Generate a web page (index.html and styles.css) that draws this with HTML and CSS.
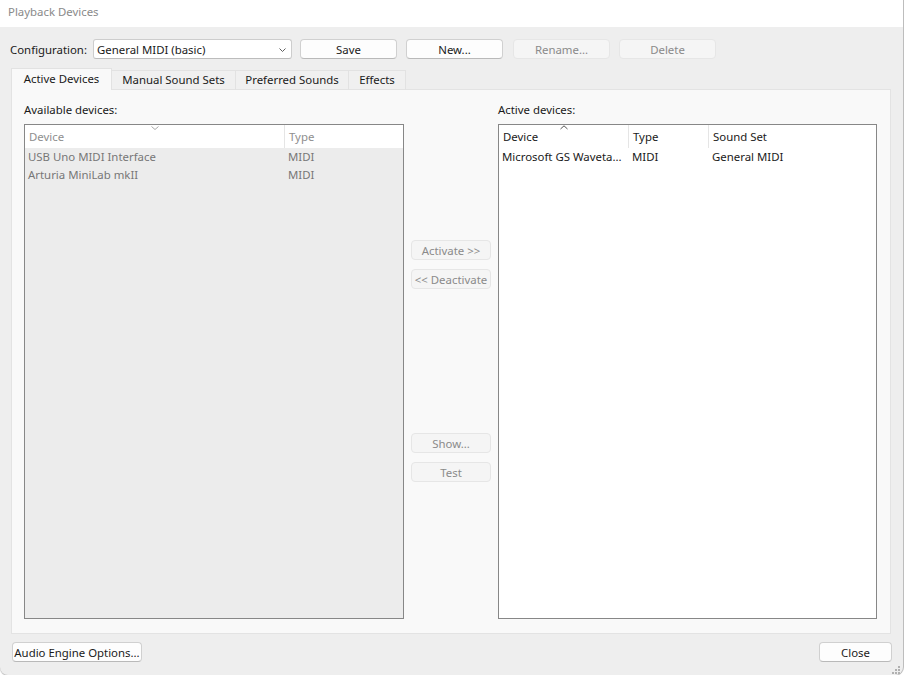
FILE: index.html
```html
<!DOCTYPE html>
<html>
<head>
<meta charset="utf-8">
<title>Playback Devices</title>
<link rel="stylesheet" href="styles.css">
</head>
<body>
<div class="window">
  <div class="titlebar">Playback Devices</div>
  <div class="config-row">
    <span class="config-label">Configuration:</span>
    <div class="combo">
      <span>General MIDI (basic)</span>
      <svg class="combo-chev" width="7" height="4" viewBox="0 0 7 4"><polyline points="0.5,0.5 3.5,3.5 6.5,0.5" fill="none" stroke="#5f5f5f" stroke-width="1"/></svg>
    </div>
    <button class="btn btn-top btn-save">Save</button>
    <button class="btn btn-top btn-new">New...</button>
    <button class="btn btn-top btn-rename" disabled>Rename...</button>
    <button class="btn btn-top btn-delete" disabled>Delete</button>
  </div>

  <div class="tabs">
    <div class="tab tab-active tab-w1">Active Devices</div>
    <div class="tab tab-w2">Manual Sound Sets</div>
    <div class="tab tab-w3">Preferred Sounds</div>
    <div class="tab tab-w4">Effects</div>
  </div>

  <div class="panel">
    <div class="list-col list-col-left">
      <div class="list-label">Available devices:</div>
      <div class="listbox listbox-disabled">
        <div class="list-head avail-grid">
          <div class="hcell hcell-div">Device</div>
          <div class="hcell">Type</div>
          <svg class="sort-ind sort-left" width="8" height="4" viewBox="0 0 8 4"><polyline points="0.5,0.5 4,3.5 7.5,0.5" fill="none" stroke="#a8a8a8" stroke-width="1"/></svg>
        </div>
        <div class="list-row avail-grid">
          <div class="cell">USB Uno MIDI Interface</div>
          <div class="cell">MIDI</div>
        </div>
        <div class="list-row avail-grid">
          <div class="cell">Arturia MiniLab mkII</div>
          <div class="cell">MIDI</div>
        </div>
      </div>
    </div>

    <div class="mid-col">
      <button class="btn btn-mid btn-activate" disabled>Activate &gt;&gt;</button>
      <button class="btn btn-mid btn-deactivate" disabled>&lt;&lt; Deactivate</button>
      <button class="btn btn-mid btn-show" disabled>Show...</button>
      <button class="btn btn-mid btn-test" disabled>Test</button>
    </div>

    <div class="list-col list-col-right">
      <div class="list-label">Active devices:</div>
      <div class="listbox">
        <div class="list-head active-grid">
          <div class="hcell hcell-div">Device</div>
          <div class="hcell hcell-div">Type</div>
          <div class="hcell">Sound Set</div>
          <svg class="sort-ind sort-right" width="8" height="5" viewBox="0 0 8 5"><polyline points="0.5,4 4,0.8 7.5,4" fill="none" stroke="#555" stroke-width="1"/></svg>
        </div>
        <div class="list-row active-grid">
          <div class="cell">Microsoft GS Waveta...</div>
          <div class="cell">MIDI</div>
          <div class="cell">General MIDI</div>
        </div>
      </div>
    </div>
  </div>

  <div class="footer">
    <button class="btn btn-audio">Audio Engine Options...</button>
    <button class="btn btn-close">Close</button>
  </div>

  <svg class="grip" width="10" height="10" viewBox="0 0 10 10">
    <rect x="8" y="2" width="2" height="2" fill="#b0b0b0"/>
    <rect x="5" y="5" width="2" height="2" fill="#b0b0b0"/>
    <rect x="8" y="5" width="2" height="2" fill="#b0b0b0"/>
    <rect x="2" y="8" width="2" height="2" fill="#b0b0b0"/>
    <rect x="5" y="8" width="2" height="2" fill="#b0b0b0"/>
    <rect x="8" y="8" width="2" height="2" fill="#b0b0b0"/>
  </svg>
</div>
</body>
</html>
```

FILE: styles.css
```css
* { box-sizing: border-box; }

html, body {
  margin: 0;
  padding: 0;
  background: #ffffff;
}

body {
  font-family: "Noto Sans", "Open Sans", sans-serif;
  font-size: 11.4px;
  color: #1a1a1a;
}

.window {
  position: relative;
  width: 903px;
  height: 675px;
  background: #eeeeee;
  border-radius: 0 0 8px 8px;
  box-shadow: 1px 0 0 #bdbdbd, 0 1px 1px rgba(0, 0, 0, 0.28);
  display: flex;
  flex-direction: column;
}

.titlebar {
  height: 27px;
  background: #ffffff;
  color: #8a8a8a;
  padding-left: 8px;
  line-height: 24px;
}

/* ---------- configuration row ---------- */
.config-row {
  display: flex;
  align-items: center;
  height: 20px;
  margin-top: 12px;
  padding-left: 10px;
}

.config-label {
  flex: 0 0 83px;
  white-space: nowrap;
}

.combo {
  width: 199px;
  height: 20px;
  border: 1px solid #cdcdcd;
  border-bottom-color: #bcbcbc;
  border-radius: 3px;
  background: #ffffff;
  display: flex;
  align-items: center;
  justify-content: space-between;
  padding: 0 5px 0 3px;
}

.combo-chev { display: block; margin-top: 1px; }

.btn {
  font-family: inherit;
  font-size: inherit;
  color: #1a1a1a;
  background: #fdfdfd;
  border: 1px solid #d0d0d0;
  border-bottom-color: #b9b9b9;
  border-radius: 4px;
  height: 20px;
  padding: 0;
  line-height: 17px;
  white-space: nowrap;
}

.btn:disabled {
  background: #f5f5f5;
  border-color: #e6e6e6;
  color: #8a8a8a;
}

.btn-top { width: 97px; }
.btn-save { margin-left: 8px; }
.btn-new { margin-left: 9px; }
.btn-rename { margin-left: 10px; }
.btn-delete { margin-left: 9px; }

/* ---------- tabs ---------- */
.tabs {
  position: relative;
  z-index: 1;
  display: flex;
  align-items: flex-end;
  height: 22px;
  margin: 9px 0 -1px 11px;
}

.tab {
  height: 20px;
  background: #f0f0f0;
  border-top: 1px solid #e2e2e2;
  border-right: 1px solid #e2e2e2;
  border-bottom: 1px solid #e3e3e3;
  text-align: center;
  line-height: 18px;
  white-space: nowrap;
}

.tab-active {
  height: 22px;
  background: #f9f9f9;
  border-left: 1px solid #e2e2e2;
  border-bottom: none;
  line-height: 20px;
}

.tab-w1 { width: 101px; }
.tab-w2 { width: 124px; }
.tab-w3 { width: 113px; }
.tab-w4 { width: 57px; }

/* ---------- panel ---------- */
.panel {
  margin-left: 11px;
  width: 880px;
  height: 545px;
  background: #f9f9f9;
  border: 1px solid #e3e3e3;
  display: flex;
  padding: 12px 13px 14px 12px;
}

.list-col {
  display: flex;
  flex-direction: column;
}

.list-col-left { width: 380px; }
.list-col-right { width: 379px; }

.list-label {
  height: 16px;
  line-height: 16px;
  margin-bottom: 6px;
  white-space: nowrap;
}

.listbox {
  position: relative;
  height: 495px;
  border: 1px solid #878787;
  background: #ffffff;
}

.listbox-disabled { background: #ececec; }

.list-head {
  position: relative;
  height: 23px;
  background: #ffffff;
}

.avail-grid {
  display: grid;
  grid-template-columns: 260px 1fr;
}

.active-grid {
  display: grid;
  grid-template-columns: 130px 80px 1fr;
}

.hcell {
  line-height: 23px;
  padding-left: 4px;
  white-space: nowrap;
}

.hcell-div { border-right: 1px solid #e5e5e5; }

.listbox-disabled .hcell { color: #8e8e8e; }

.list-row { height: 18px; }

.cell {
  line-height: 18px;
  padding-left: 3px;
  white-space: nowrap;
  overflow: hidden;
}

.listbox-disabled .cell { color: #777777; }

.sort-ind {
  position: absolute;
  top: 1px;
  display: block;
}

.sort-left { left: 126px; }
.sort-right { left: 61px; top: 0; }

.mid-col {
  width: 80px;
  margin: 0 7px;
  display: flex;
  flex-direction: column;
}

.btn-mid { width: 80px; }
.btn-activate { margin-top: 138px; }
.btn-deactivate { margin-top: 9px; }
.btn-show { margin-top: 144px; }
.btn-test { margin-top: 9px; }

/* ---------- footer ---------- */
.footer {
  display: flex;
  justify-content: space-between;
  margin-top: 8px;
  padding: 0 11px 0 12px;
}

.btn-audio { width: 130px; }
.btn-close { width: 73px; }

.grip {
  position: absolute;
  right: 3px;
  bottom: 1px;
}
```
